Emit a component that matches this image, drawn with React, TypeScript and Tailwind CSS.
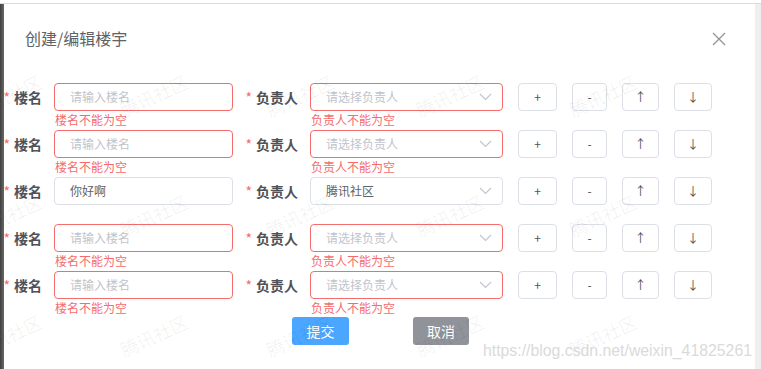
import React from "react";

const FONT = '"Noto Sans CJK SC", "Noto Sans", "Liberation Sans", sans-serif';

type RowData = { name: string; owner: string; error: boolean };

const rows: RowData[] = [
  { name: "", owner: "", error: true },
  { name: "", owner: "", error: true },
  { name: "你好啊", owner: "腾讯社区", error: false },
  { name: "", owner: "", error: true },
  { name: "", owner: "", error: true },
];

function Label({ text }: { text: string }) {
  return (
    <span className="flex shrink-0 whitespace-nowrap items-center text-[14px] font-bold text-[#505257] leading-none">
      <span className="text-[#f56c6c] font-normal mr-[4px] text-[14px]">*</span>
      {text}
    </span>
  );
}

function Chevron() {
  return (
    <svg width="13" height="8" viewBox="0 0 13 8" fill="none">
      <path d="M1 1 L6.5 6.5 L12 1" stroke="#c0c4cc" strokeWidth="1.1" />
    </svg>
  );
}

function SmallBtn({ children, w }: { children: React.ReactNode; w: string }) {
  return (
    <div
      className={`${w} h-[28px] border border-[#dcdfe6] rounded-[4px] flex items-center justify-center text-[12px] text-[#505257] bg-white`}
    >
      {children}
    </div>
  );
}

function Row({ r }: { r: RowData }) {
  const border = r.error ? "border-[#f56c6c]" : "border-[#dcdfe6]";
  return (
    <div className="flex h-[47px] relative">
      <div className="w-[50px] shrink-0 h-[28px] flex justify-end items-center pr-[12px]">
        <Label text="楼名" />
      </div>
      <div className="w-[179px] flex flex-col">
        <div
          className={`h-[28px] border ${border} rounded-[4px] flex items-center pl-[15px] text-[12px] ${
            r.name ? "text-[#606266]" : "text-[#c0c4cc]"
          } bg-white`}
        >
          {r.name || "请输入楼名"}
        </div>
        {r.error && (
          <div className="text-[12px] leading-[15px] text-[#f56c6c] pt-[1px] pl-[1px] whitespace-nowrap">楼名不能为空</div>
        )}
      </div>
      <div className="w-[77px] shrink-0 h-[28px] flex justify-end items-center pr-[12px]">
        <Label text="负责人" />
      </div>
      <div className="w-[193px] flex flex-col">
        <div
          className={`h-[28px] border ${border} rounded-[4px] flex items-center justify-between pl-[15px] pr-[10px] text-[12px] ${
            r.owner ? "text-[#606266]" : "text-[#c0c4cc]"
          } bg-white`}
        >
          <span>{r.owner || "请选择负责人"}</span>
          <Chevron />
        </div>
        {r.error && (
          <div className="text-[12px] leading-[15px] text-[#f56c6c] pt-[1px] pl-[1px] whitespace-nowrap">负责人不能为空</div>
        )}
      </div>
      <div className="ml-[15px] flex gap-[15px]">
        <SmallBtn w="w-[39px]">+</SmallBtn>
        <SmallBtn w="w-[35px]">-</SmallBtn>
        <SmallBtn w="w-[37px]">↑</SmallBtn>
        <SmallBtn w="w-[38px]">↓</SmallBtn>
      </div>
    </div>
  );
}

const marks: { x: number; y: number }[] = [];
[95, 215, 335].forEach((y) => {
  [10, 156, 302, 452, 605].forEach((x) => marks.push({ x, y }));
});

export default function App() {
  return (
    <div
      className="w-[761px] h-[369px] bg-white overflow-hidden relative flex flex-col"
      style={{ fontFamily: FONT }}
    >
      <div className="h-[4px] bg-white border-b border-[#dcdcdc] shrink-0" />
      <div className="flex flex-1">
        <div className="w-[4px] shrink-0 bg-gradient-to-r from-[#3f3f3f] to-[#6a6a6a]" />
        <div className="flex-1 bg-white flex flex-col">
          <div className="flex items-center justify-between pt-[22px] pl-[21px] pr-[29px] h-[46px]">
            <span className="text-[16px] leading-[24px] text-[#606266]">创建/编辑楼宇</span>
            <svg width="14" height="14" viewBox="0 0 14 14" className="mt-[1px]">
              <path d="M1 1 L13 13 M13 1 L1 13" stroke="#909399" strokeWidth="1.3" />
            </svg>
          </div>
          <div className="mt-[33px] flex flex-col">
            {rows.map((r, i) => (
              <Row key={i} r={r} />
            ))}
          </div>
          <div className="flex justify-center gap-[64px] -mt-[1px] pl-[2px]">
            <div className="w-[57px] h-[28px] rounded-[3px] bg-[#4aa6ff] text-white text-[14px] flex items-center justify-center">
              提交
            </div>
            <div className="w-[56px] h-[28px] rounded-[3px] bg-[#909399] text-white text-[14px] flex items-center justify-center">
              取消
            </div>
          </div>
        </div>
        <div className="w-[6px] shrink-0 bg-[#efefef]" />
      </div>

      {marks.map((m, i) => (
        <div
          key={i}
          className="absolute pointer-events-none text-[18px] text-[rgba(0,0,0,0.06)] whitespace-nowrap"
          style={{ left: m.x - 38, top: m.y - 13, transform: "rotate(-25deg)" }}
        >
          腾讯社区
        </div>
      ))}
      <div
        className="absolute pointer-events-none text-[17px] text-[#dadada] whitespace-nowrap origin-left scale-x-[0.93]"
        style={{ left: 483, top: 338, fontFamily: '"Liberation Sans", Arial, sans-serif' }}
      >
        https://blog.csdn.net/weixin_41825261
      </div>
    </div>
  );
}
